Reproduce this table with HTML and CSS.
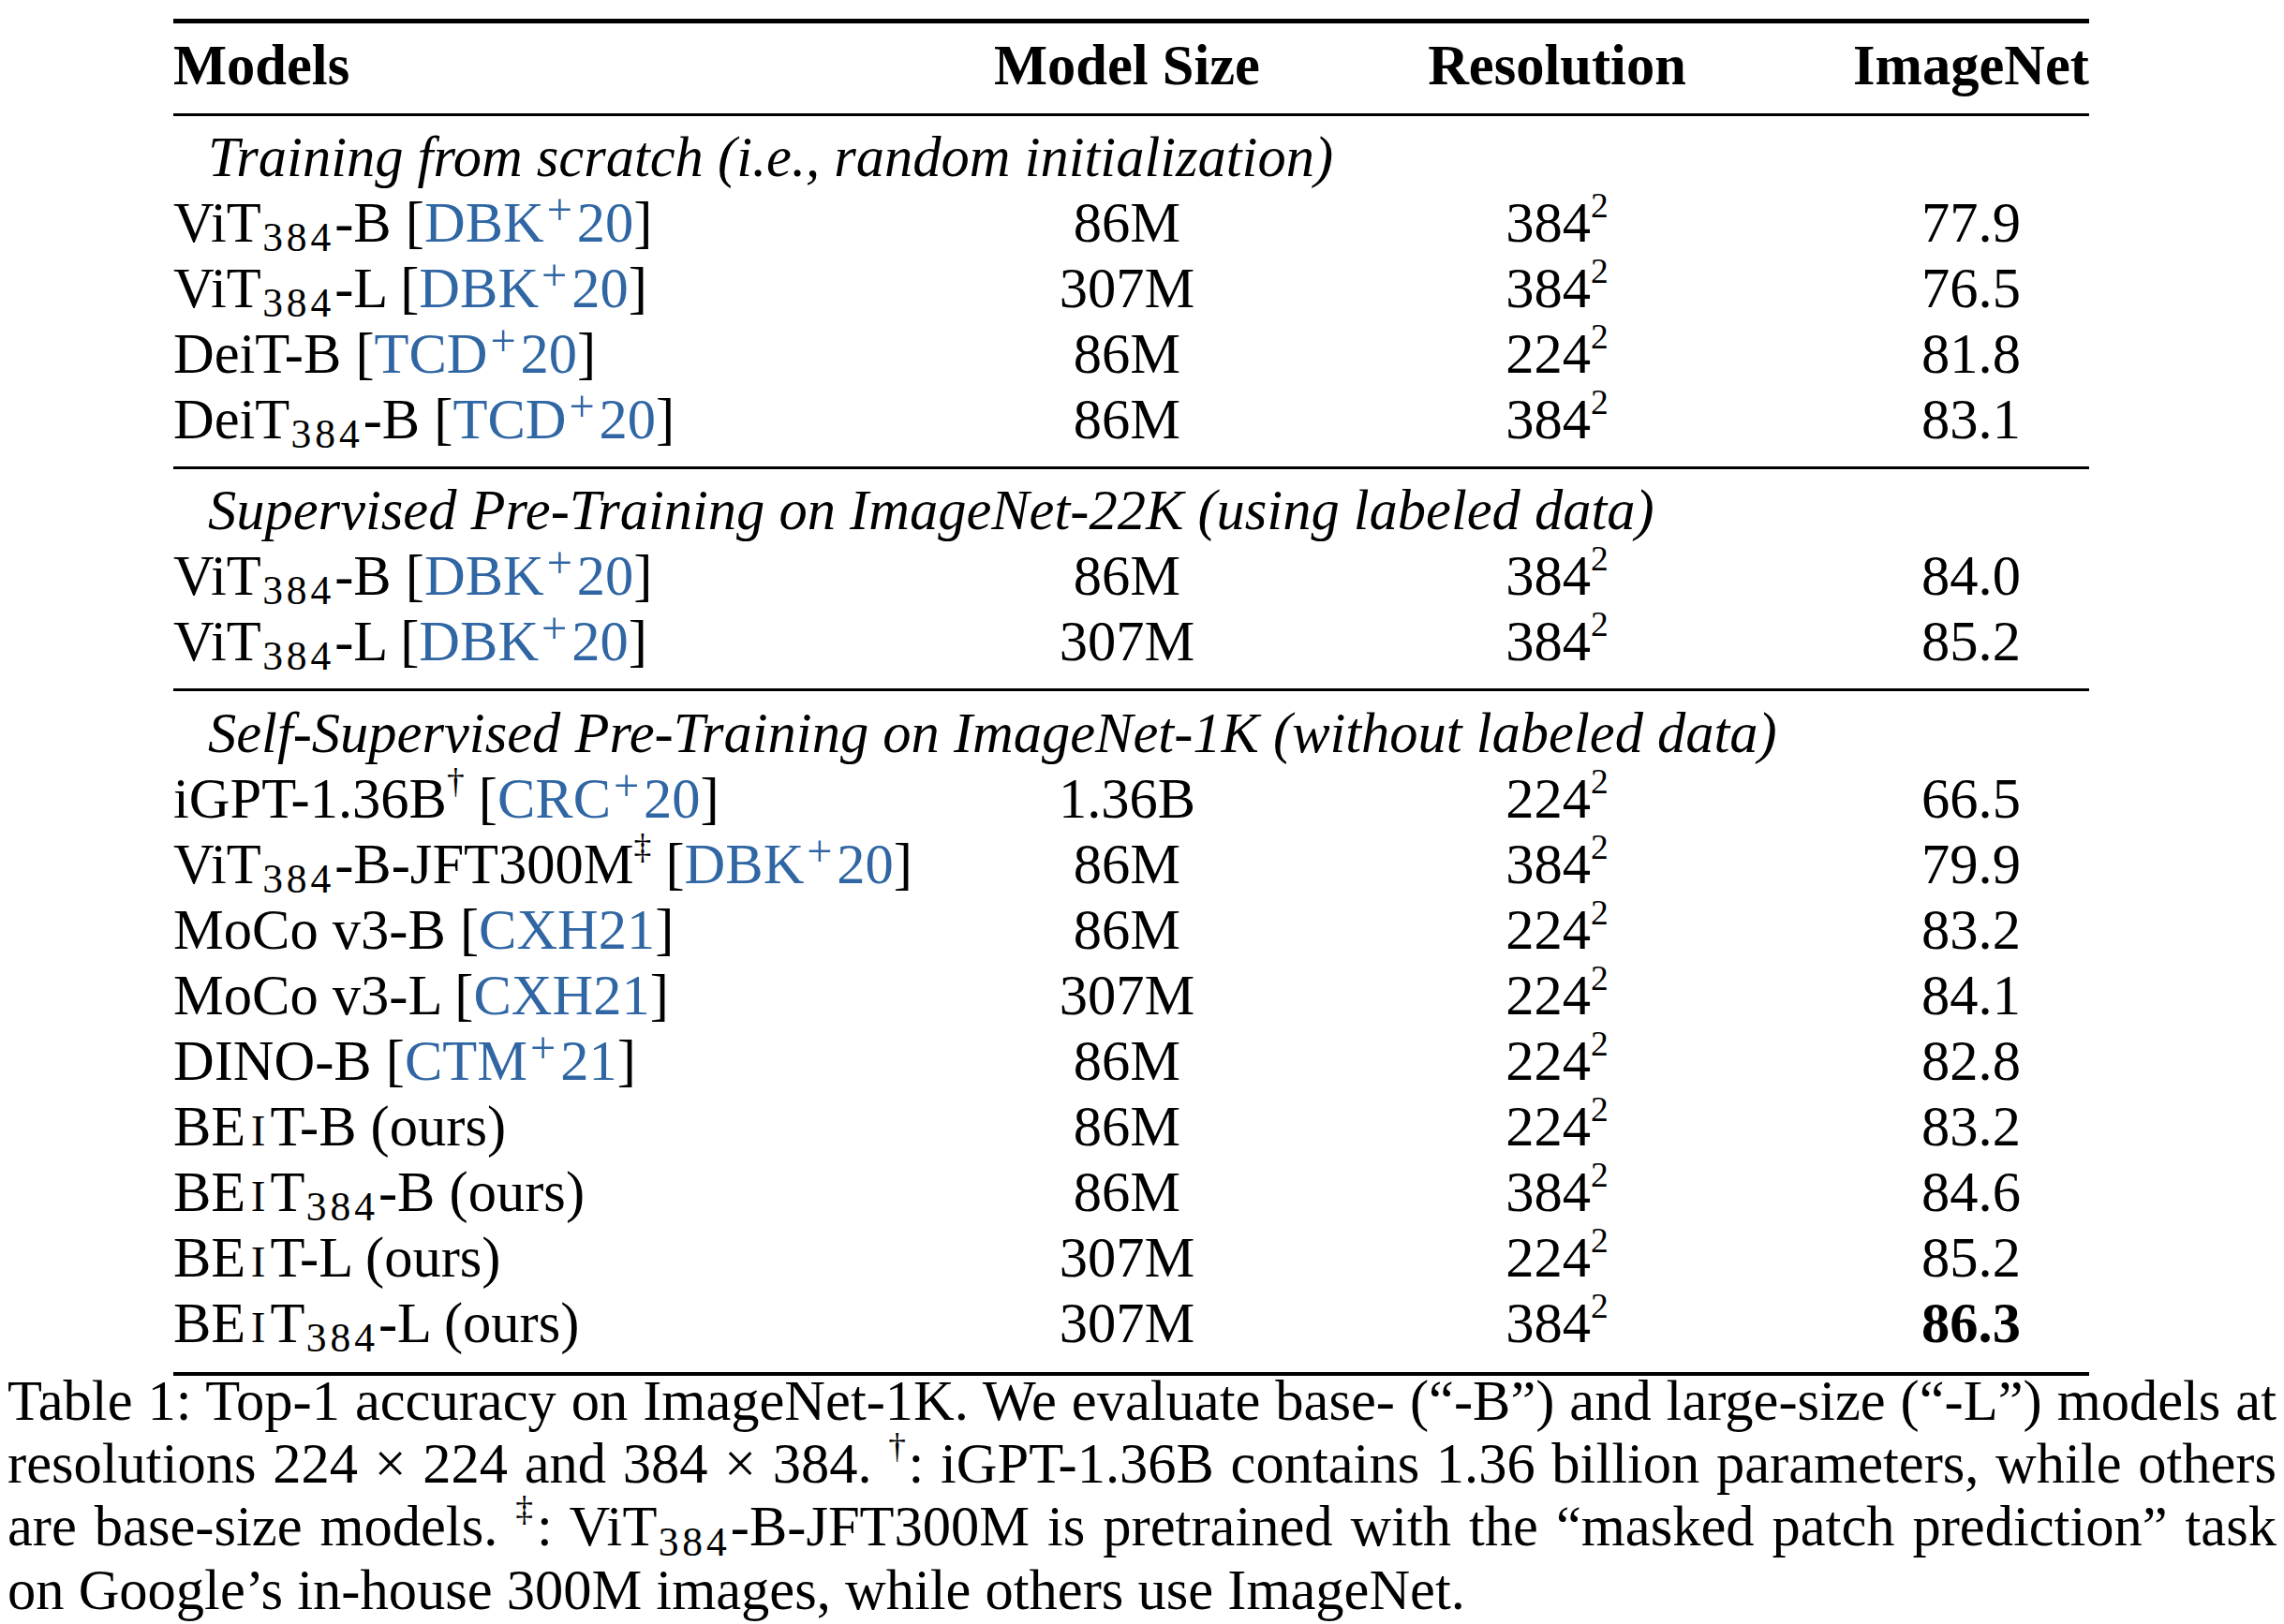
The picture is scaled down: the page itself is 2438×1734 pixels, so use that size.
FILE: index.html
```html
<!DOCTYPE html>
<html lang="en">
<head>
<meta charset="utf-8">
<title>Table 1</title>
<link rel="stylesheet" href="styles.css">
</head>
<body>
<figure class="figure">
  <div class="tbl">
    <div class="sect head">
      <div class="row"><span class="c1">Models</span><span class="cc">Model Size</span><span class="cc">Resolution</span><span class="cc">ImageNet</span></div>
    </div>
    <div class="sect">
      <div class="title">Training from scratch (i.e., random initialization)</div>
      <div class="row"><span class="c1">ViT<span class="sub">384</span>-B [<a class="cite">DBK<span class="sup">+</span>20</a>]</span><span class="cc">86M</span><span class="cc">384<span class="pow">2</span></span><span class="cc">77.9</span></div>
      <div class="row"><span class="c1">ViT<span class="sub">384</span>-L [<a class="cite">DBK<span class="sup">+</span>20</a>]</span><span class="cc">307M</span><span class="cc">384<span class="pow">2</span></span><span class="cc">76.5</span></div>
      <div class="row"><span class="c1">DeiT-B [<a class="cite">TCD<span class="sup">+</span>20</a>]</span><span class="cc">86M</span><span class="cc">224<span class="pow">2</span></span><span class="cc">81.8</span></div>
      <div class="row"><span class="c1">DeiT<span class="sub">384</span>-B [<a class="cite">TCD<span class="sup">+</span>20</a>]</span><span class="cc">86M</span><span class="cc">384<span class="pow">2</span></span><span class="cc">83.1</span></div>
    </div>
    <div class="sect">
      <div class="title">Supervised Pre-Training on ImageNet-22K (using labeled data)</div>
      <div class="row"><span class="c1">ViT<span class="sub">384</span>-B [<a class="cite">DBK<span class="sup">+</span>20</a>]</span><span class="cc">86M</span><span class="cc">384<span class="pow">2</span></span><span class="cc">84.0</span></div>
      <div class="row"><span class="c1">ViT<span class="sub">384</span>-L [<a class="cite">DBK<span class="sup">+</span>20</a>]</span><span class="cc">307M</span><span class="cc">384<span class="pow">2</span></span><span class="cc">85.2</span></div>
    </div>
    <div class="sect last">
      <div class="title">Self-Supervised Pre-Training on ImageNet-1K (without labeled data)</div>
      <div class="row"><span class="c1">iGPT-1.36B<span class="pow">†</span> [<a class="cite">CRC<span class="sup">+</span>20</a>]</span><span class="cc">1.36B</span><span class="cc">224<span class="pow">2</span></span><span class="cc">66.5</span></div>
      <div class="row"><span class="c1">ViT<span class="sub">384</span>-B-JFT300M<span class="pow">‡</span> [<a class="cite">DBK<span class="sup">+</span>20</a>]</span><span class="cc">86M</span><span class="cc">384<span class="pow">2</span></span><span class="cc">79.9</span></div>
      <div class="row"><span class="c1">MoCo v3-B [<a class="cite">CXH21</a>]</span><span class="cc">86M</span><span class="cc">224<span class="pow">2</span></span><span class="cc">83.2</span></div>
      <div class="row"><span class="c1">MoCo v3-L [<a class="cite">CXH21</a>]</span><span class="cc">307M</span><span class="cc">224<span class="pow">2</span></span><span class="cc">84.1</span></div>
      <div class="row"><span class="c1">DINO-B [<a class="cite">CTM<span class="sup">+</span>21</a>]</span><span class="cc">86M</span><span class="cc">224<span class="pow">2</span></span><span class="cc">82.8</span></div>
      <div class="row"><span class="c1">BE<span class="sc">i</span>T-B (ours)</span><span class="cc">86M</span><span class="cc">224<span class="pow">2</span></span><span class="cc">83.2</span></div>
      <div class="row"><span class="c1">BE<span class="sc">i</span>T<span class="sub">384</span>-B (ours)</span><span class="cc">86M</span><span class="cc">384<span class="pow">2</span></span><span class="cc">84.6</span></div>
      <div class="row"><span class="c1">BE<span class="sc">i</span>T-L (ours)</span><span class="cc">307M</span><span class="cc">224<span class="pow">2</span></span><span class="cc">85.2</span></div>
      <div class="row"><span class="c1">BE<span class="sc">i</span>T<span class="sub">384</span>-L (ours)</span><span class="cc">307M</span><span class="cc">384<span class="pow">2</span></span><span class="cc"><b class="best">86.3</b></span></div>
    </div>
  </div>
  <figcaption class="caption">
    <span class="line just">Table 1: Top-1 accuracy on ImageNet-1K. We evaluate base- (“-B”) and large-size (“-L”) models at</span>
    <span class="line just">resolutions 224 × 224 and 384 × 384. <span class="pow">†</span>: iGPT-1.36B contains 1.36 billion parameters, while others</span>
    <span class="line just">are base-size models. <span class="pow">‡</span>: ViT<span class="sub">384</span>-B-JFT300M is pretrained with the “masked patch prediction” task</span>
    <span class="line">on Google’s in-house 300M images, while others use ImageNet.</span>
  </figcaption>
</figure>
</body>
</html>
```

FILE: styles.css
```css
html, body {
  margin: 0;
  background: #ffffff;
}

body {
  padding: 0 8px;
  font-family: "Liberation Serif", "Times New Roman", serif;
  color: #000000;
}

.figure {
  margin: 0;
}

.tbl {
  margin: 20px 0 0 177px;
  width: 2045px;
  border-top: 5px solid #000;
  border-bottom: 4px solid #000;
  font-size: 60.5px;
  line-height: 70px;
}

.sect {
  padding: 9px 0 15px;
  border-bottom: 3px solid #000;
}

.sect.head {
  padding: 10px 0 16px;
  font-weight: bold;
}

.sect.last {
  border-bottom: 0;
  padding: 10px 0 17px;
}

.row {
  display: grid;
  grid-template-columns: 875px 286px 632px 252px;
  white-space: nowrap;
}

.c1 {
  text-align: left;
}

.cc {
  text-align: center;
}

.title {
  font-style: italic;
  padding-left: 37px;
  white-space: nowrap;
}

.cite {
  color: #2f66a3;
  text-decoration: none;
}

.sub {
  font-size: 0.72em;
  line-height: 0;
  letter-spacing: 0.09em;
  vertical-align: -0.24em;
  margin-left: 0.03em;
}

.sup {
  font-size: 0.8em;
  line-height: 0;
  vertical-align: 0.38em;
  padding: 0 0.1em 0 0.06em;
}

.pow {
  font-size: 0.62em;
  line-height: 0;
  vertical-align: 0.7em;
}

.sc {
  font-variant: small-caps;
  font-size: 1.1em;
  line-height: 0;
  padding: 0 0.08em;
}

.best {
  font-weight: bold;
}

.caption {
  margin-top: -7px;
  font-size: 60.5px;
  line-height: 67.2px;
}

.line {
  display: block;
  white-space: nowrap;
}

.line.just {
  text-align: justify;
  text-align-last: justify;
  white-space: normal;
}
```
